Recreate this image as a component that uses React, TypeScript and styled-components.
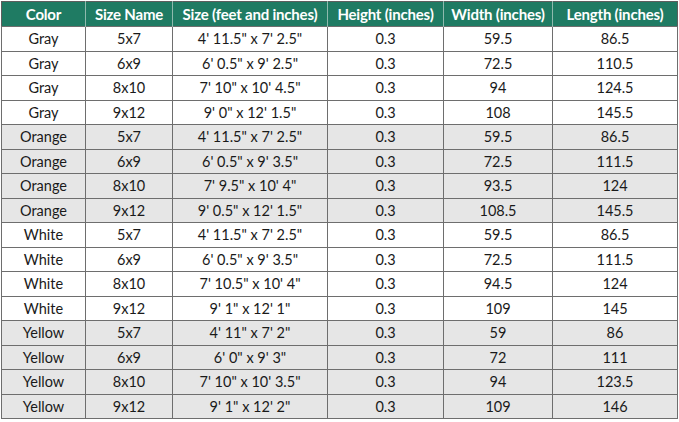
import React from "react";
import styled, { createGlobalStyle } from "styled-components";

const GlobalStyle = createGlobalStyle`
  html, body {
    margin: 0;
    padding: 0;
    background: #ffffff;
  }
  body {
    font-family: Lato, "Open Sans", sans-serif;
  }
`;

const Page = styled.div`
  width: 679px;
  height: 422px;
  padding: 1px 2px 3px 1px;
  box-sizing: border-box;
`;

const Table = styled.table`
  width: 676px;
  height: 418px;
  border-collapse: collapse;
  table-layout: fixed;
  border: 1px solid #5e5e5e;
`;

const HeadCell = styled.th`
  height: 24px;
  padding: 0;
  background: #1f7b63;
  color: #ffffff;
  font-weight: 700;
  font-size: 15px;
  letter-spacing: -0.2px;
  text-align: center;
  border-left: 1px solid #8fb9ad;
  &:first-child {
    border-left: none;
  }
`;

const Row = styled.tr<{ shaded: boolean }>`
  background: ${(p) => (p.shaded ? "#e6e6e6" : "#ffffff")};
`;

const Cell = styled.td`
  padding: 0;
  text-align: center;
  font-size: 14.5px;
  color: #1a1a1a;
  border: 1px solid #6e6e6e;
`;

const columns = [
  { title: "Color", width: 84 },
  { title: "Size Name", width: 87 },
  { title: "Size (feet and inches)", width: 155 },
  { title: "Height (inches)", width: 116 },
  { title: "Width (inches)", width: 109 },
  { title: "Length (inches)", width: 125 },
];

const rows: string[][] = [
  ["Gray", "5x7", `4' 11.5" x 7' 2.5"`, "0.3", "59.5", "86.5"],
  ["Gray", "6x9", `6' 0.5" x 9' 2.5"`, "0.3", "72.5", "110.5"],
  ["Gray", "8x10", `7' 10" x 10' 4.5"`, "0.3", "94", "124.5"],
  ["Gray", "9x12", `9' 0" x 12' 1.5"`, "0.3", "108", "145.5"],
  ["Orange", "5x7", `4' 11.5" x 7' 2.5"`, "0.3", "59.5", "86.5"],
  ["Orange", "6x9", `6' 0.5" x 9' 3.5"`, "0.3", "72.5", "111.5"],
  ["Orange", "8x10", `7' 9.5" x 10' 4"`, "0.3", "93.5", "124"],
  ["Orange", "9x12", `9' 0.5" x 12' 1.5"`, "0.3", "108.5", "145.5"],
  ["White", "5x7", `4' 11.5" x 7' 2.5"`, "0.3", "59.5", "86.5"],
  ["White", "6x9", `6' 0.5" x 9' 3.5"`, "0.3", "72.5", "111.5"],
  ["White", "8x10", `7' 10.5" x 10' 4"`, "0.3", "94.5", "124"],
  ["White", "9x12", `9' 1" x 12' 1"`, "0.3", "109", "145"],
  ["Yellow", "5x7", `4' 11" x 7' 2"`, "0.3", "59", "86"],
  ["Yellow", "6x9", `6' 0" x 9' 3"`, "0.3", "72", "111"],
  ["Yellow", "8x10", `7' 10" x 10' 3.5"`, "0.3", "94", "123.5"],
  ["Yellow", "9x12", `9' 1" x 12' 2"`, "0.3", "109", "146"],
];

const shadedColors = ["Orange", "Yellow"];

export default function App() {
  return (
    <Page>
      <GlobalStyle />
      <Table>
        <colgroup>
          {columns.map((c) => (
            <col key={c.title} style={{ width: c.width }} />
          ))}
        </colgroup>
        <thead>
          <tr>
            {columns.map((c) => (
              <HeadCell key={c.title}>{c.title}</HeadCell>
            ))}
          </tr>
        </thead>
        <tbody>
          {rows.map((r, i) => (
            <Row key={i} shaded={shadedColors.includes(r[0])}>
              {r.map((v, j) => (
                <Cell key={j}>{v}</Cell>
              ))}
            </Row>
          ))}
        </tbody>
      </Table>
    </Page>
  );
}
